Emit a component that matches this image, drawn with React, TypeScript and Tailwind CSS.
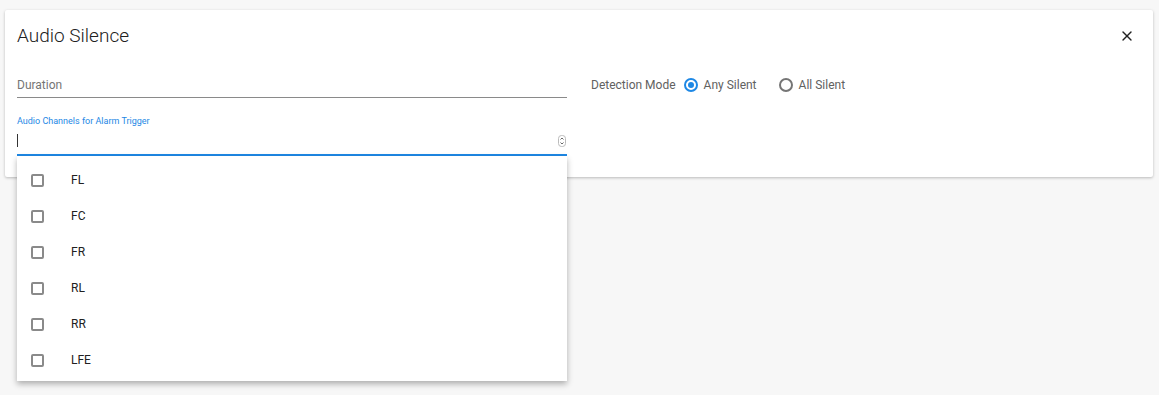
import { X } from 'lucide-react';

const channels = ['FL', 'FC', 'FR', 'RL', 'RR', 'LFE'];

function Radio({ checked, label }: { checked: boolean; label: string }) {
  return (
    <label className="flex items-center gap-[6px] cursor-pointer">
      <span
        className={`flex h-[14px] w-[14px] items-center justify-center rounded-full border-2 ${
          checked ? 'border-[#1e88e5]' : 'border-[#757575]'
        }`}
      >
        {checked && <span className="h-[6px] w-[6px] rounded-full bg-[#1e88e5]" />}
      </span>
      <span className="text-[12px] text-[#616161]">{label}</span>
    </label>
  );
}

export default function App() {
  return (
    <div className="min-h-[395px] bg-[#f7f7f7] pt-[10px] pl-[5px] font-['Roboto',sans-serif]">
      <div className="w-[1148px] rounded-[2px] bg-white shadow-[0_1px_3px_rgba(0,0,0,0.25)] px-[12px] pb-[21px]">
        {/* header */}
        <div className="flex items-center justify-between pt-[14px]">
          <h2 className="text-[19px] font-light leading-[24px] text-[#212121]">Audio Silence</h2>
          <button className="mr-[6px] text-[#212121]" title="Close">
            <X size={16} strokeWidth={2} />
          </button>
        </div>

        <div className="mt-[24px] flex">
          <div className="w-[550px]">
            {/* duration */}
            <div className="border-b border-[#8a8a8a] pb-[1px]">
              <span className="text-[12px] leading-[16px] text-[#757575]">Duration</span>
            </div>

            {/* channels select */}
            <div className="relative mt-[17px]">
              <div className="text-[9px] leading-[12px] text-[#1e88e5]">Audio Channels for Alarm Trigger</div>
              <div className="flex h-[29px] items-center justify-between border-b-2 border-[#1e88e5]">
                <span className="h-[13px] w-px bg-[#333]" />
                <svg width="8" height="12" viewBox="0 0 8 12" className="mr-px">
                  <rect x="0.5" y="0.5" width="7" height="11" rx="3" fill="none" stroke="#bbb" />
                  <path d="M2.5 4.5 L4 3 L5.5 4.5" fill="none" stroke="#555" strokeWidth="0.9" />
                  <path d="M2.5 7.5 L4 9 L5.5 7.5" fill="none" stroke="#555" strokeWidth="0.9" />
                </svg>
              </div>
              <ul className="absolute left-0 top-full z-10 w-[550px] bg-white pt-[6px] pb-[3px] shadow-[0_3px_6px_rgba(0,0,0,0.3)]">
                {channels.map((c) => (
                  <li key={c} className="flex h-[36px] items-center">
                    <span className="ml-[14px] h-[13px] w-[13px] rounded-[2px] border-2 border-[#8a8a8a]" />
                    <span className="ml-[27px] text-[12px] text-[#212121]">{c}</span>
                  </li>
                ))}
              </ul>
            </div>
          </div>

          {/* detection mode */}
          <div className="ml-[24px] mt-[5px] flex h-[16px] items-center gap-[8px]">
            <span className="text-[12px] text-[#616161]">Detection Mode</span>
            <Radio checked label="Any Silent" />
            <span className="w-[6px]" />
            <Radio checked={false} label="All Silent" />
          </div>
        </div>
      </div>
    </div>
  );
}
